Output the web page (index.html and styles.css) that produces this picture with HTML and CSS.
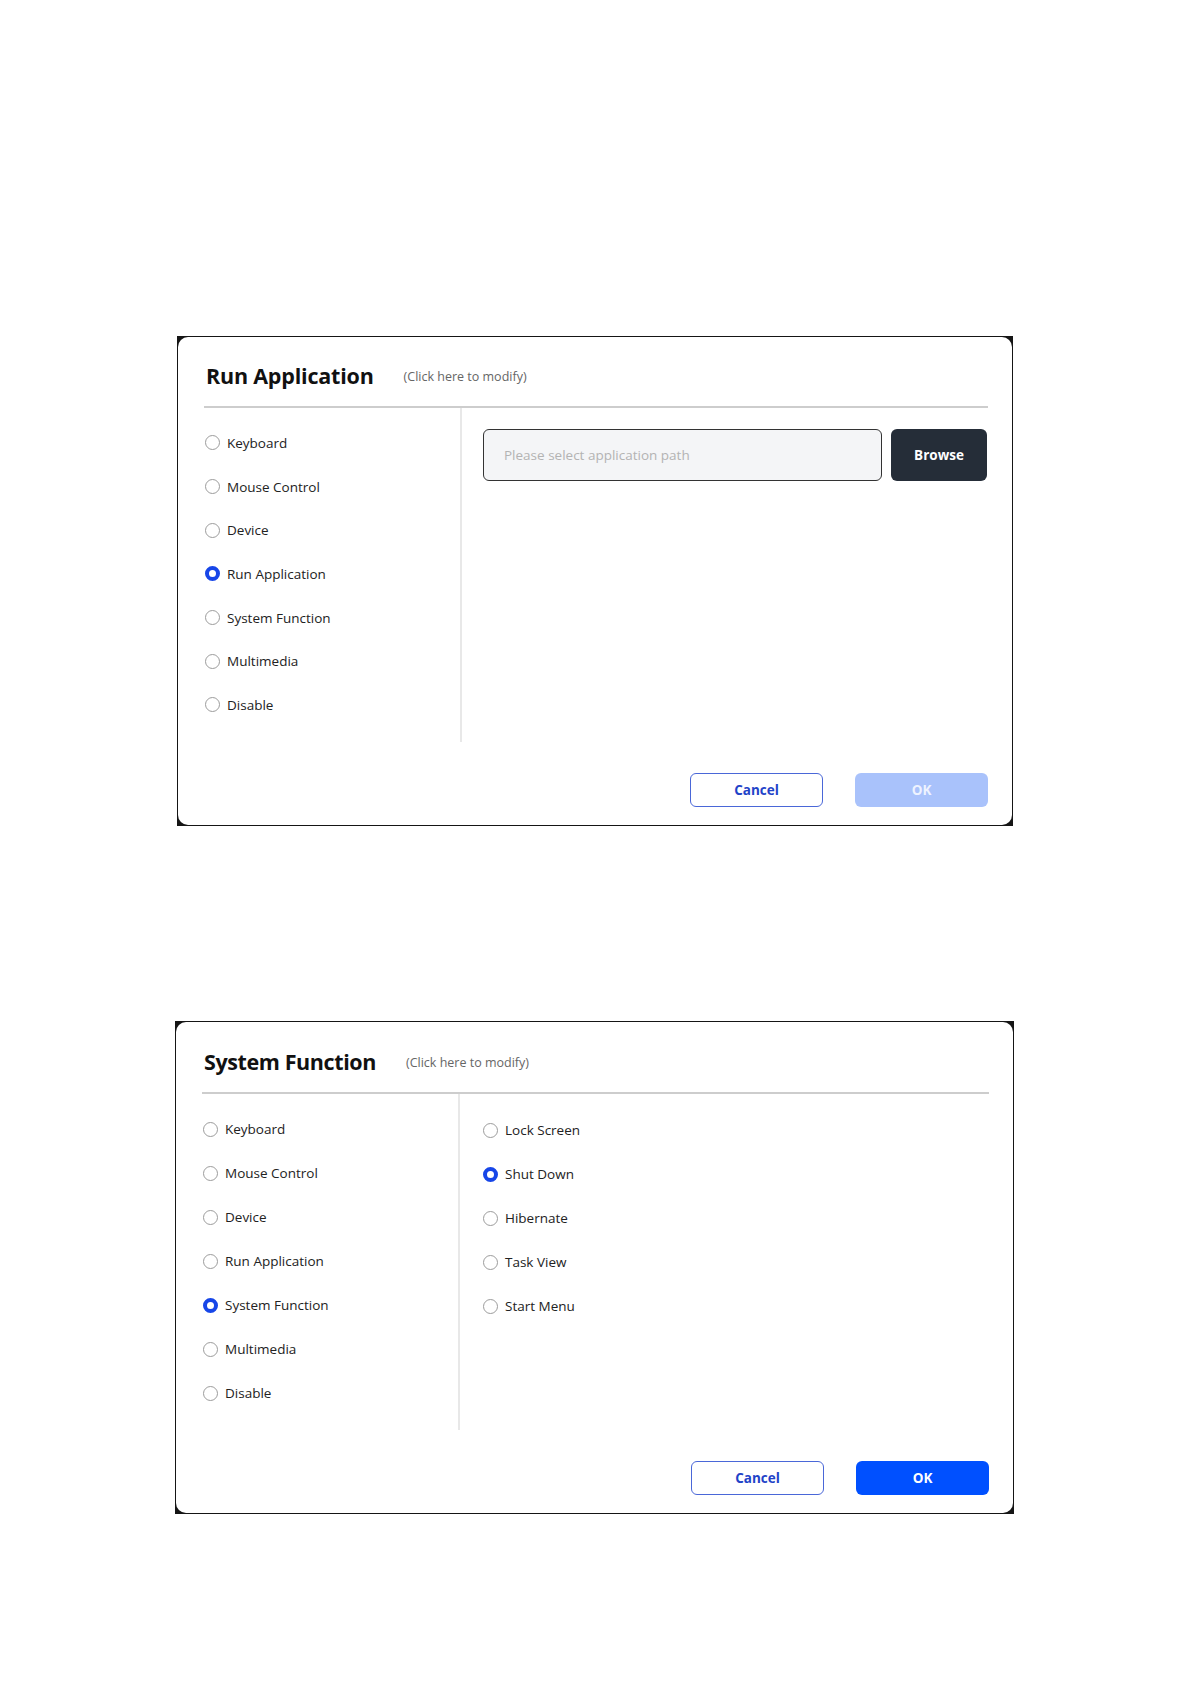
FILE: index.html
```html
<!DOCTYPE html>
<html>
  <head>
    <meta name="viewport" content="width=device-width, initial-scale=1.0" />
    <link rel="stylesheet" href="styles.css">
  </head>

  <body>
    <div class="page">
      <!--first dialog: run application-->
      <div class="dialog-frame">
        <div class="dialog">
          <div class="dialog-header">
            <span class="dialog-title">Run Application</span>
            <span class="dialog-hint">(Click here to modify)</span>
          </div>
          <div class="dialog-body">
            <div class="type-list">
              <div class="radio-row"><span class="radio"></span>Keyboard</div>
              <div class="radio-row"><span class="radio"></span>Mouse Control</div>
              <div class="radio-row"><span class="radio"></span>Device</div>
              <div class="radio-row"><span class="radio checked"></span>Run Application</div>
              <div class="radio-row"><span class="radio"></span>System Function</div>
              <div class="radio-row"><span class="radio"></span>Multimedia</div>
              <div class="radio-row"><span class="radio"></span>Disable</div>
            </div>
            <div class="type-detail">
              <div class="path-row">
                <div class="path-input">Please select application path</div>
                <button class="btn btn-dark">Browse</button>
              </div>
            </div>
          </div>
          <div class="dialog-footer">
            <button class="btn btn-outline">Cancel</button>
            <button class="btn btn-primary disabled">OK</button>
          </div>
        </div>
      </div>

      <!--second dialog: system function-->
      <div class="dialog-frame second">
        <div class="dialog">
          <div class="dialog-header">
            <span class="dialog-title">System Function</span>
            <span class="dialog-hint">(Click here to modify)</span>
          </div>
          <div class="dialog-body">
            <div class="type-list">
              <div class="radio-row"><span class="radio"></span>Keyboard</div>
              <div class="radio-row"><span class="radio"></span>Mouse Control</div>
              <div class="radio-row"><span class="radio"></span>Device</div>
              <div class="radio-row"><span class="radio"></span>Run Application</div>
              <div class="radio-row"><span class="radio checked"></span>System Function</div>
              <div class="radio-row"><span class="radio"></span>Multimedia</div>
              <div class="radio-row"><span class="radio"></span>Disable</div>
            </div>
            <div class="type-detail options">
              <div class="radio-row"><span class="radio"></span>Lock Screen</div>
              <div class="radio-row"><span class="radio checked"></span>Shut Down</div>
              <div class="radio-row"><span class="radio"></span>Hibernate</div>
              <div class="radio-row"><span class="radio"></span>Task View</div>
              <div class="radio-row"><span class="radio"></span>Start Menu</div>
            </div>
          </div>
          <div class="dialog-footer">
            <button class="btn btn-outline">Cancel</button>
            <button class="btn btn-primary">OK</button>
          </div>
        </div>
      </div>
    </div>
  </body>
</html>
```

FILE: styles.css
```css
body {
  margin: 0;
  background: #fff;
  font-family: "Open Sans", "Noto Sans", sans-serif;
  color: #222;
}

.page {
  padding: 336px 0 0 177px;
}

/*dark frame behind the rounded dialog (visible in the corners):*/
.dialog-frame {
  width: 836px;
  background: #151515;
  padding: 1px;
  box-sizing: border-box;
}

.dialog-frame.second {
  margin: 195px 0 0 -2px;
  width: 839px;
}

.dialog {
  background: #fff;
  border-radius: 10px;
  padding: 0 24px 18px 26px;
}

.dialog-header {
  display: flex;
  align-items: center;
  gap: 30px;
  padding: 8px 0 0 2px;
  height: 61px;
  border-bottom: 2px solid #cdcdcd;
}

.second .dialog-header {
  height: 62px;
}

.dialog-title {
  font-size: 21.5px;
  font-weight: 700;
  color: #111;
  letter-spacing: -0.2px;
}

.second .dialog-title {
  letter-spacing: -0.4px;
}

.dialog-hint {
  font-size: 12.5px;
  color: #666;
  padding-top: 2px;
}

.dialog-body {
  display: flex;
  height: 334px;
}

.second .dialog-body {
  height: 336px;
}

.type-list {
  width: 258px;
  padding-top: 13px;
  border-right: 2px solid #e8e8e8;
  box-sizing: border-box;
}

.type-detail {
  flex: 1;
  padding: 21px 0 0 21px;
}

.type-detail.options {
  padding: 14px 0 0 22px;
}

.radio-row {
  display: flex;
  align-items: center;
  height: 43.7px;
  font-size: 13.5px;
  padding-left: 1px;
}

.second .radio-row {
  height: 44px;
}

.radio {
  width: 15px;
  height: 15px;
  border-radius: 50%;
  border: 1.5px solid #9c9c9c;
  box-sizing: border-box;
  margin-right: 7px;
  flex-shrink: 0;
}

.radio.checked {
  border: 4px solid #1746e8;
}

.path-row {
  display: flex;
  gap: 9px;
}

.path-input {
  width: 399px;
  height: 52px;
  box-sizing: border-box;
  border: 1px solid #333;
  border-radius: 6px;
  background: #f4f5f7;
  color: #b3b3b3;
  font-size: 13.5px;
  padding-left: 20px;
  display: flex;
  align-items: center;
}

.btn {
  font-family: "Open Sans", "Noto Sans", sans-serif;
  font-weight: 700;
  font-size: 13.5px;
  border-radius: 6px;
  cursor: pointer;
}

.btn-dark {
  width: 96px;
  height: 52px;
  border: none;
  background: #252d38;
  color: #fff;
}

.dialog-footer {
  display: flex;
  justify-content: flex-end;
  gap: 32px;
  margin-top: 31px;
}

.btn-outline,
.btn-primary {
  width: 133px;
  height: 34px;
}

.btn-outline {
  background: #fff;
  border: 1px solid #4a67d8;
  color: #1f43c8;
}

.btn-primary {
  border: none;
  background: #0050ff;
  color: #fff;
}

.btn-primary.disabled {
  background: #a9c2fb;
  color: #eef3ff;
}
```
